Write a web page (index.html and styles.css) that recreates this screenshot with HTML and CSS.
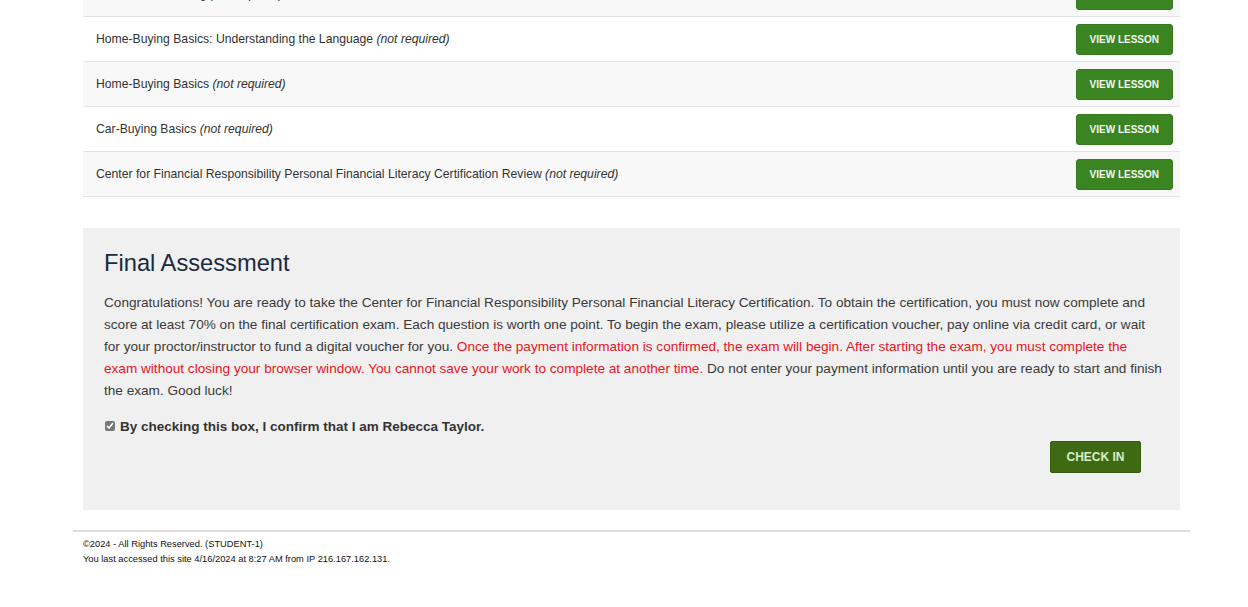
FILE: index.html
```html
<!DOCTYPE html>
<html lang="en">

<head>
    <meta charset="UTF-8">
    <meta name="viewport" content="width=device-width, initial-scale=1.0">
    <title>Course Lessons</title>
    <link rel="stylesheet" href="styles.css">
</head>

<body>
    <div class="contenido">
        <table class="lecciones">
            <tr>
                <td>Retirement Planning <em>(not required)</em></td>
                <td class="accion"><button class="btn-leccion">View Lesson</button></td>
            </tr>
            <tr>
                <td>Home-Buying Basics: Understanding the Language <em>(not required)</em></td>
                <td class="accion"><button class="btn-leccion">View Lesson</button></td>
            </tr>
            <tr>
                <td>Home-Buying Basics <em>(not required)</em></td>
                <td class="accion"><button class="btn-leccion">View Lesson</button></td>
            </tr>
            <tr>
                <td>Car-Buying Basics <em>(not required)</em></td>
                <td class="accion"><button class="btn-leccion">View Lesson</button></td>
            </tr>
            <tr>
                <td>Center for Financial Responsibility Personal Financial Literacy Certification Review <em>(not required)</em></td>
                <td class="accion"><button class="btn-leccion">View Lesson</button></td>
            </tr>
        </table>

        <div class="evaluacion">
            <h2>Final Assessment</h2>
            <p>
                Congratulations! You are ready to take the Center for Financial Responsibility Personal Financial Literacy Certification. To obtain the certification, you must now complete and score at least 70% on the final certification exam. Each question is worth one point. To begin the exam, please utilize a certification voucher, pay online via credit card, or wait for your proctor/instructor to fund a digital voucher for you.
                <span class="aviso">Once the payment information is confirmed, the exam will begin. After starting the exam, you must complete the exam without closing your browser window. You cannot save your work to complete at another time.</span>
                Do not enter your payment information until you are ready to start and finish the exam. Good luck!
            </p>
            <label class="confirmar">
                <input type="checkbox" checked>
                By checking this box, I confirm that I am Rebecca Taylor.
            </label>
            <div class="fila-boton">
                <button class="btn-checkin">Check In</button>
            </div>
        </div>

        <footer class="pie">
            <p>&copy;2024 - All Rights Reserved. (STUDENT-1)</p>
            <p>You last accessed this site 4/16/2024 at 8:27 AM from IP 216.167.162.131.</p>
        </footer>
    </div>
</body>

</html>
```

FILE: styles.css
```css
* {
    box-sizing: border-box;
    margin: 0;
    padding: 0;
    font-family: "Liberation Sans", Arial, sans-serif;
}

body {
    background-color: #fff;
    color: #333;
}

.contenido {
    width: 1117px;
    margin-left: 73px;
    padding: 0 10px;
}

.lecciones {
    width: 100%;
    margin-top: -29px;
    border-collapse: collapse;
    font-size: 12.2px;
}

.lecciones td {
    height: 45px;
    padding: 0 13px;
    border-top: 1px solid #e3e3e3;
    border-bottom: 1px solid #e3e3e3;
    vertical-align: middle;
}

.lecciones tr:nth-child(odd) td {
    background-color: #f8f8f8;
}

.lecciones td.accion {
    text-align: right;
    padding-right: 7px;
}

.btn-leccion {
    height: 31px;
    padding: 0 13px;
    background-color: #3b8422;
    color: #f2f8ee;
    border: 1px solid #367a1f;
    border-radius: 3px;
    font-size: 10px;
    font-weight: bold;
    text-transform: uppercase;
    cursor: pointer;
}

.evaluacion {
    margin-top: 31px;
    height: 282px;
    padding: 20px 18px 0 21px;
    background-color: #f0f0f0;
}

.evaluacion h2 {
    font-size: 23.7px;
    line-height: 30px;
    font-weight: normal;
    color: #1b2a3e;
}

.evaluacion p {
    margin-top: 14px;
    font-size: 13.6px;
    line-height: 22px;
    color: #3a3a3a;
}

.aviso {
    color: #e8151f;
}

.confirmar {
    display: flex;
    align-items: center;
    gap: 5px;
    margin-top: 14px;
    height: 20px;
    font-size: 13.5px;
    font-weight: bold;
    color: #333;
}

.confirmar input {
    width: 10px;
    height: 10px;
    margin: 0 0 1px 1px;
    accent-color: #777;
}

.fila-boton {
    display: flex;
    justify-content: flex-end;
    padding-right: 21px;
    margin-top: 5px;
}

.btn-checkin {
    width: 91px;
    height: 32px;
    background-color: #3f6a13;
    color: #d9efc6;
    border: 1px solid #365c10;
    border-radius: 2px;
    font-size: 12px;
    font-weight: bold;
    text-transform: uppercase;
    cursor: pointer;
}

.pie {
    margin: 20px -10px 0;
    padding: 5px 10px 0;
    border-top: 2px solid #ddd;
    font-size: 9.3px;
    line-height: 15px;
    color: #111;
}
```
